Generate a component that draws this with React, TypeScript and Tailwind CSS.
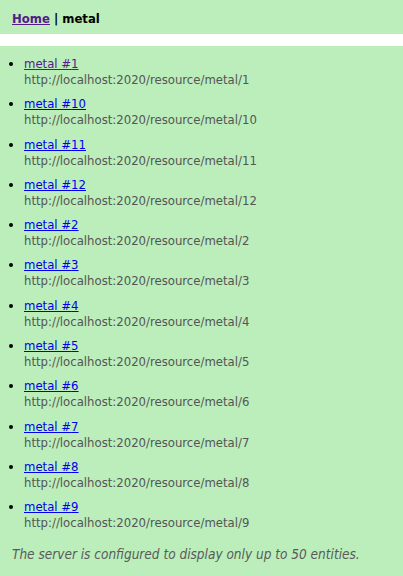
const items = ["1", "10", "11", "12", "2", "3", "4", "5", "6", "7", "8", "9"];

export default function App() {
  return (
    <div className="min-h-[576px] bg-white text-[13px] text-black" style={{ fontFamily: "Tahoma, 'DejaVu Sans Condensed', 'Liberation Sans', sans-serif" }}>
      {/* Header */}
      <div className="h-[34px] bg-[#bbeebb] px-[12px] pt-[3px] flex items-center font-bold">
        <a href="#" className="text-[#551a8b] underline">Home</a>
        <span className="mx-[4px]">|</span>
        <span>metal</span>
      </div>

      {/* Entity list */}
      <div className="mt-[12px] bg-[#bbeebb] pt-[10px] pb-[14px] min-h-[530px]">
        <ul className="list-disc pl-[24px] flex flex-col gap-[8.3px] m-0">
          {items.map((n, i) => (
            <li key={n} className="leading-[16px]">
              <a href="#" className={`underline ${i === 0 ? "text-[#551a8b]" : "text-[#0000ee]"}`}>
                metal #{n}
              </a>
              <div className="text-[#555555] leading-[16px]">
                http://localhost:2020/resource/metal/{n}
              </div>
            </li>
          ))}
        </ul>
        <p className="mt-[15px] px-[12px] italic text-[13.5px] leading-[17px] text-[#5a5a5a]">
          The server is configured to display only up to 50 entities.
        </p>
      </div>
    </div>
  );
}
